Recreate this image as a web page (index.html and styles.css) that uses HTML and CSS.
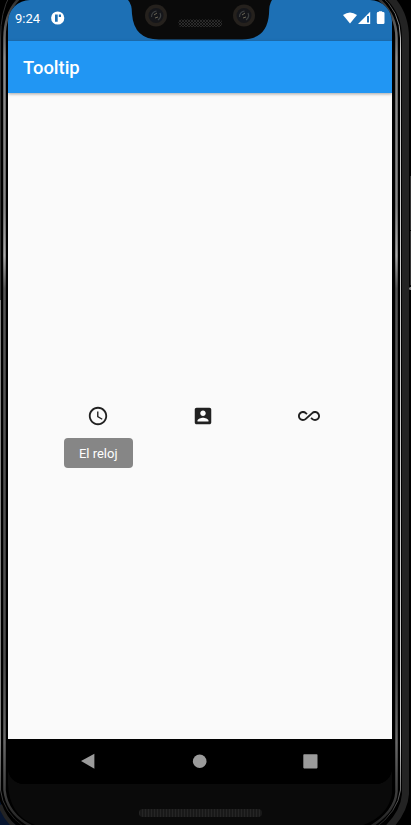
FILE: index.html
```html
<!DOCTYPE html>
<html lang="es">
<head>
<meta charset="utf-8">
<title>Tooltip</title>
<link rel="stylesheet" href="styles.css">
</head>
<body>
<div class="device">
  <svg class="frame" viewBox="0 0 411 825" aria-hidden="true">
    <defs>
      <linearGradient id="metal" x1="0" y1="0" x2="0" y2="825" gradientUnits="userSpaceOnUse">
        <stop offset="0" stop-color="#333"/><stop offset=".07" stop-color="#8a8a8a"/>
        <stop offset=".25" stop-color="#858585"/><stop offset=".31" stop-color="#aaa"/><stop offset=".35" stop-color="#555"/>
        <stop offset=".8" stop-color="#4c4c4c"/><stop offset=".9" stop-color="#686868"/>
        <stop offset="1" stop-color="#222"/>
      </linearGradient>
      <linearGradient id="edge" x1="0" y1="0" x2="0" y2="825" gradientUnits="userSpaceOnUse">
        <stop offset="0" stop-color="#444"/><stop offset=".06" stop-color="#ccc"/>
        <stop offset=".9" stop-color="#c8c8c8"/><stop offset="1" stop-color="#222"/>
      </linearGradient>
    </defs>
    <rect width="411" height="825" fill="#000"/>
    <path d="M0 801V825H16Q6 819 0 801Z" fill="#07152f"/>
    <path d="M382 -9Q405.500 8 405.500 38V794Q404 814 384 832" fill="none" stroke="#232323" stroke-width="7"/>
    <path d="M8 765H392V794Q388 816 363 825H35Q9 815 8 784Z" fill="#0a0a0a"/>
    <path d="M374 -5Q396.500 12 396.500 38V792Q395 812 370 827" fill="none" stroke="url(#metal)" stroke-width="2.500"/>
    <path d="M379 -6Q400.500 11 400.500 38V790Q398 812 374 829" fill="none" stroke="url(#edge)" stroke-width="1"/>
    <path d="M23 -5Q4.500 10 4.500 38V790Q7 815 33 827" fill="none" stroke="url(#metal)" stroke-width="2.500"/>
    <path d="M10 -5Q.5 12 .5 38V300" fill="none" stroke="#333" stroke-width="1"/>
    <path d="M.5 300V790Q3 812 24 827" fill="none" stroke="url(#edge)" stroke-width="1" opacity=".65"/>
    <path d="M0 805Q5 819 16 828" fill="none" stroke="#232323" stroke-width="4"/>
    <path d="M410.500 176V230M410.500 231V285" stroke="#333"/>
    <circle cx="410.500" cy="288.500" r="1.500" fill="#888"/>
  </svg>

  <main class="screen">
    <div class="status">
      <span class="time">9:24</span>
      <svg class="app-dot" viewBox="0 0 14 14"><circle cx="6.700" cy="7" r="6.600" fill="#fff"/><path d="M4 3.500h2.700v7.200H4zM7.800 3.500h2.200v2.500H7.800z" fill="#1d70b5"/></svg>
      <svg class="signals" viewBox="0 0 42 14">
        <path d="M0 4Q7-1.200 14 4L7 12.500Z" fill="#fff"/>
        <path d="M15 13L27.200.8V13Z" fill="#fff"/><path d="M24 5h2v6.500h-2z" fill="#1d70b5"/>
        <path d="M35.800 1v-.8h3.400V1h1q1.300 0 1.300 1.200v9.600q0 1.200-1.300 1.200h-5.200q-1.200 0-1.200-1.200V2.200Q33.800 1 35 1z" fill="#fff"/>
      </svg>
    </div>
    <header class="appbar"><h1>Tooltip</h1></header>
    <section class="content">
      <div class="cell">
        <svg class="icon" viewBox="0 0 24 24"><path d="M11.990 2C6.470 2 2 6.480 2 12s4.470 10 9.990 10C17.520 22 22 17.520 22 12S17.520 2 11.990 2zM12 20c-4.420 0-8-3.580-8-8s3.580-8 8-8 8 3.580 8 8-3.580 8-8 8zm.5-13H11v6l5.250 3.150.75-1.230-4.500-2.670z"/></svg>
        <div class="tooltip" role="tooltip">El reloj</div>
      </div>
      <div class="cell">
        <svg class="icon" viewBox="0 0 24 24"><path d="M3 5v14c0 1.100.89 2 2 2h14c1.100 0 2-.9 2-2V5c0-1.100-.9-2-2-2H5c-1.110 0-2 .9-2 2zm12 4c0 1.660-1.340 3-3 3s-3-1.340-3-3 1.340-3 3-3 3 1.340 3 3zm-9 8c0-2 4-3.100 6-3.100s6 1.100 6 3.100v1H6v-1z"/></svg>
      </div>
      <div class="cell">
        <svg class="icon" viewBox="0 0 24 24"><path d="M18.600 6.620c-1.440 0-2.800.56-3.770 1.530L12 10.660 10.480 12h.01L7.800 14.390c-.64.640-1.490.99-2.400.99-1.870 0-3.390-1.510-3.390-3.380S3.530 8.620 5.400 8.620c.91 0 1.760.35 2.440 1.030l1.130 1 1.510-1.340L9.220 8.200C8.200 7.180 6.840 6.620 5.400 6.620 2.420 6.620 0 9.040 0 12s2.420 5.380 5.400 5.380c1.440 0 2.800-.56 3.770-1.530l2.830-2.500.01.010L13.520 12h-.01l2.690-2.390c.64-.64 1.490-.99 2.400-.99 1.870 0 3.390 1.510 3.390 3.380s-1.520 3.380-3.390 3.380c-.9 0-1.760-.35-2.440-1.030l-1.140-1.010-1.510 1.340 1.270 1.120c1.020 1.010 2.370 1.570 3.820 1.570 2.980 0 5.400-2.410 5.400-5.380s-2.420-5.370-5.400-5.370z"/></svg>
      </div>
    </section>
    <nav class="navbar">
      <svg viewBox="0 0 16 16"><path d="M1 8L14.400.7v15z"/></svg>
      <svg viewBox="0 0 16 16"><circle cx="8.700" cy="8.300" r="6.800"/></svg>
      <svg viewBox="0 0 16 16"><rect x="1.300" y="1.200" width="14.200" height="14.200" rx=".8"/></svg>
    </nav>
  </main>

  <svg class="notch" viewBox="0 0 160 41" aria-hidden="true">
    <defs>
      <pattern id="mesh" width="3" height="3" patternUnits="userSpaceOnUse"><path d="M0 0l3 3M3 0L0 3" stroke="#3c3c3c" stroke-width=".6"/></pattern>
    </defs>
    <path d="M8 0Q12 4 12 14Q14 39.500 39 39.500H122Q147 39.500 149 14Q149 4 152 0Z" fill="#0a0a0a"/>
    <g id="lens"><circle cx="36" cy="15.500" r="11" fill="#25211d"/><circle cx="36" cy="15.500" r="7.500" fill="#15161a"/><path d="M31.500 17q0-5 5-6M40 13q2 4-2 7" fill="none" stroke="#3c3f40" stroke-width="1.200"/><path d="M34 15l3-2M35 18l3-1" stroke="#6b6656"/></g>
    <use href="#lens" x="88"/>
    <rect x="58.500" y="19.500" width="43.500" height="7.500" rx="3" fill="url(#mesh)"/>
  </svg>
  <div class="speaker"></div>
</div>
</body>
</html>
```
FILE: styles.css
```css
* { box-sizing: border-box; }

body {
  margin: 0;
  background: #000;
  font-family: Roboto, sans-serif;
}

.device {
  position: relative;
  width: 411px;
  height: 825px;
  padding: 0 19px 0 8px;
  overflow: hidden;
}

.frame {
  position: absolute;
  inset: 0;
  width: 411px;
  height: 825px;
}

.screen {
  position: relative;
  display: flex;
  flex-direction: column;
  width: 384px;
  height: 784px;
  overflow: hidden;
  border-radius: 22px 22px 16px 16px;
  background: #000;
}

.status {
  display: flex;
  align-items: center;
  flex: 0 0 41px;
  padding: 0 7px 5px;
  background: #1d70b5;
  color: #fff;
}

.time {
  width: 36px;
  padding-top: 1px;
  font-size: 13px;
  line-height: 16px;
}

.app-dot {
  width: 14px;
  height: 14px;
}

.signals {
  width: 42px;
  height: 14px;
  margin-left: auto;
}

.appbar {
  position: relative;
  display: flex;
  align-items: center;
  flex: 0 0 52px;
  padding: 0 15px;
  background: #2196f3;
  box-shadow: 0 1px 3px rgba(0, 0, 0, 0.35);
  color: #fff;
}

.appbar h1 {
  margin: 0;
  font-size: 18.400px;
  font-weight: 500;
  line-height: 25px;
}

.content {
  display: flex;
  flex: 1;
  align-items: center;
  justify-content: center;
  gap: 83.500px;
  padding-left: 6.500px;
  background: #fafafa;
}

.cell {
  position: relative;
  display: flex;
  width: 22px;
}

.icon {
  width: 22px;
  height: 22px;
  fill: #212121;
}

.tooltip {
  position: absolute;
  top: 33px;
  left: -23px;
  width: 69px;
  height: 30px;
  border-radius: 4px;
  background: #868686;
  color: #fff;
  font-size: 13px;
  line-height: 31px;
  text-align: center;
  white-space: nowrap;
}

.navbar {
  display: flex;
  flex: 0 0 45px;
  justify-content: space-between;
  padding: 14px 74px 0 72px;
  background: #000;
}

.navbar svg {
  width: 16px;
  height: 16px;
  fill: #9b9b9b;
}

.notch {
  position: absolute;
  top: 0;
  left: 120px;
  width: 160px;
  height: 41px;
}

.speaker {
  position: absolute;
  top: 809px;
  left: 139px;
  width: 123px;
  height: 8px;
  border-radius: 4px;
  background: repeating-linear-gradient(90deg, #252525 0 1px, #191919 1px 3px);
}
```
